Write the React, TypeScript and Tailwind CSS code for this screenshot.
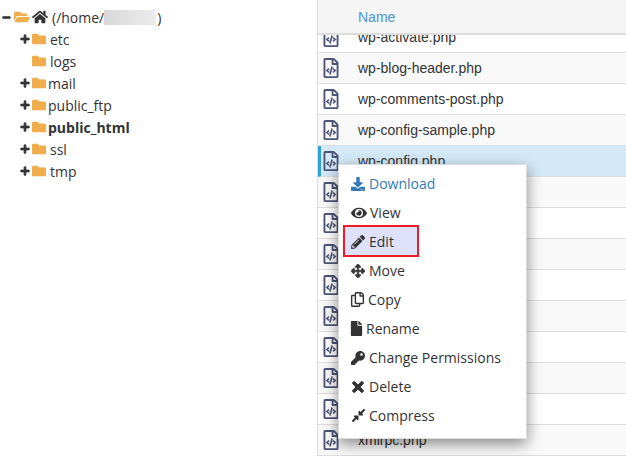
import React from 'react';
import {
  FaArrowsAlt,
  FaCompressAlt,
  FaDownload,
  FaEye,
  FaFile,
  FaFolder,
  FaFolderOpen,
  FaHome,
  FaKey,
  FaMinus,
  FaPencilAlt,
  FaPlus,
  FaRegCopy,
  FaRegFileCode,
  FaTimes,
} from 'react-icons/fa';

const folders = [
  { name: 'etc', toggle: true, gap: 'ml-[4px]' },
  { name: 'logs', toggle: false, gap: 'ml-[4px]' },
  { name: 'mail', toggle: true, gap: 'ml-[2px]' },
  { name: 'public_ftp', toggle: true, gap: 'ml-[2px]' },
  { name: 'public_html', toggle: true, gap: 'ml-[2px] font-bold' },
  { name: 'ssl', toggle: true, gap: 'ml-[4px]' },
  { name: 'tmp', toggle: true, gap: 'ml-[4px]' },
];

const files = [
  'wp-blog-header.php',
  'wp-comments-post.php',
  'wp-config-sample.php',
  'wp-config.php',
  'wp-cron.php',
  'wp-links-opml.php',
  'wp-load.php',
  'wp-login.php',
  'wp-mail.php',
  'wp-settings.php',
  'wp-signup.php',
  'wp-trackback.php',
  'xmlrpc.php',
];

const menu = [
  { label: 'Download', icon: <FaDownload size={14} />, cls: 'text-[#337ab7]', w: 'w-[18px]' },
  { label: 'View', icon: <FaEye size={16} />, cls: '', w: 'w-[19px]' },
  { label: 'Edit', icon: <FaPencilAlt size={14} />, cls: '', w: 'w-[18px]' },
  { label: 'Move', icon: <FaArrowsAlt size={14} className="stroke-current stroke-[20]" />, cls: '', w: 'w-[18px]' },
  { label: 'Copy', icon: <FaRegCopy size={15} className="-ml-px" />, cls: '', w: 'w-[17px]' },
  { label: 'Rename', icon: <FaFile size={15} className="-ml-[2px]" />, cls: '', w: 'w-[15px]' },
  { label: 'Change Permissions', icon: <FaKey size={14} />, cls: '', w: 'w-[18px]' },
  { label: 'Delete', icon: <FaTimes size={16} className="-ml-[1px] stroke-current stroke-[30]" />, cls: '', w: 'w-[18px]' },
  { label: 'Compress', icon: <FaCompressAlt size={15} />, cls: '', w: 'w-[18px]' },
];

export default function App() {
  return (
    <div className="relative flex h-[456px] w-[626px] overflow-hidden bg-white font-['Open_Sans',sans-serif] text-[14px] text-[#333]">
      {/* Folder tree */}
      <div className="w-[317px] shrink-0 pl-[2px] pt-[6px]">
        <div className="flex h-[22px] items-center">
          <FaMinus size={9} className="stroke-current stroke-[50] text-[#333]" />
          <FaFolderOpen size={16} className="ml-[3px] text-[#f0ad4e]" />
          <FaHome size={16} className="ml-[2px] text-[#333]" />
          <span className="ml-[4px]">(/home/</span>
          <span className="h-[15px] w-[52px] bg-gradient-to-r from-[#d8d8d8] to-[#ececec]" />
          <span className="ml-[1px]">)</span>
        </div>
        {folders.map((f) => (
          <div key={f.name} className="flex h-[22px] items-center pl-[17px]">
            <span className="flex w-[11px] justify-center">
              {f.toggle && <FaPlus size={10} className="stroke-current stroke-[40] text-[#333]" />}
            </span>
            <FaFolder size={14} className="ml-[2px] text-[#f0ad4e]" />
            <span className={f.gap}>{f.name}</span>
          </div>
        ))}
      </div>

      {/* File list */}
      <div className="flex-1 border-l border-[#ddd] font-['Liberation_Sans',sans-serif]">
        <div className="flex h-[35px] items-center border-b-2 border-[#ddd] bg-[#f5f5f5] pl-[40px] pt-[2px] text-[#4a94d4]">
          Name
        </div>
        <div className="flex h-[18px] items-end overflow-hidden border-b border-[#ddd]">
          <div className="flex h-[30px] w-full shrink-0 items-center pl-[3px]">
            <FaRegFileCode size={20} className="text-[#4c5578]" />
            <span className="ml-[17px]">wp-activate.php</span>
          </div>
        </div>
        {files.map((name, i) => (
          <div
            key={name}
            className={
              'flex h-[31px] items-center border-b border-[#ddd] ' +
              (name === 'wp-config.php'
                ? 'border-l-[3px] border-l-[#31a0d8] bg-[#d4e9f7]'
                : i % 2 === 0
                  ? 'bg-[#f9f9f9] pl-[3px]'
                  : 'bg-white pl-[3px]')
            }
          >
            <FaRegFileCode size={20} className="text-[#4c5578]" />
            <span className="ml-[17px]">{name}</span>
          </div>
        ))}
      </div>

      {/* Context menu */}
      <div className="absolute left-[338px] top-[164px] w-[189px] border border-[#ddd] bg-white pb-[8px] pt-[4px] shadow-[0_5px_14px_rgba(0,0,0,0.45)]">
        {menu.map((m) => (
          <div key={m.label} className={'relative flex h-[29px] items-center pl-[12px] ' + m.cls}>
            {m.label === 'Edit' && (
              <div className="absolute left-[4px] top-[-2px] h-[32px] w-[76px] border-2 border-[#ee1c25] bg-[#dde1fa]" />
            )}
            <span className={'relative flex shrink-0 ' + m.w}>{m.icon}</span>
            <span className="relative">{m.label}</span>
          </div>
        ))}
      </div>
    </div>
  );
}
